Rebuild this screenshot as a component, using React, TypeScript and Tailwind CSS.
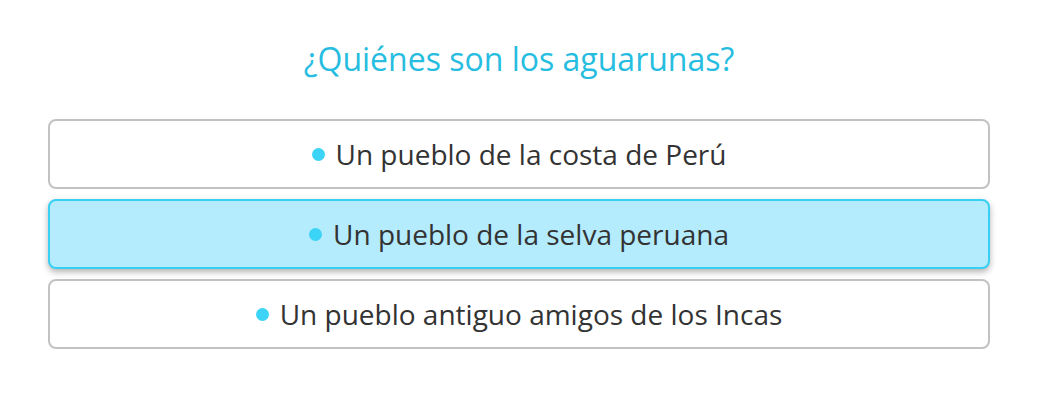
const options = [
  { text: 'Un pueblo de la costa de Perú', selected: false },
  { text: 'Un pueblo de la selva peruana', selected: true },
  { text: 'Un pueblo antiguo amigos de los Incas', selected: false },
];

export default function App() {
  return (
    <div
      className="min-h-screen bg-white px-12 pt-[35px]"
      style={{ fontFamily: '"Segoe UI", "Open Sans", sans-serif' }}
    >
      <h2 className="text-center text-[32px] leading-[48px] text-[#26bde0]">¿Quiénes son los aguarunas?</h2>
      <div className="mt-[36px] flex flex-col gap-[10px]">
        {options.map((o) => (
          <button
            key={o.text}
            className={`flex h-[70px] w-full items-center justify-center gap-[11px] rounded-lg border-2 text-[28px] text-[#333333] ${
              o.selected
                ? 'border-[#38d0f2] bg-[#b4ebfd] shadow-[0_3px_6px_rgba(0,0,0,0.3)]'
                : 'border-[#c2c2c2] bg-white'
            }`}
          >
            <span className="h-[13px] w-[13px] rounded-full bg-[#3bd3f6]" />
            <span>{o.text}</span>
          </button>
        ))}
      </div>
    </div>
  );
}
